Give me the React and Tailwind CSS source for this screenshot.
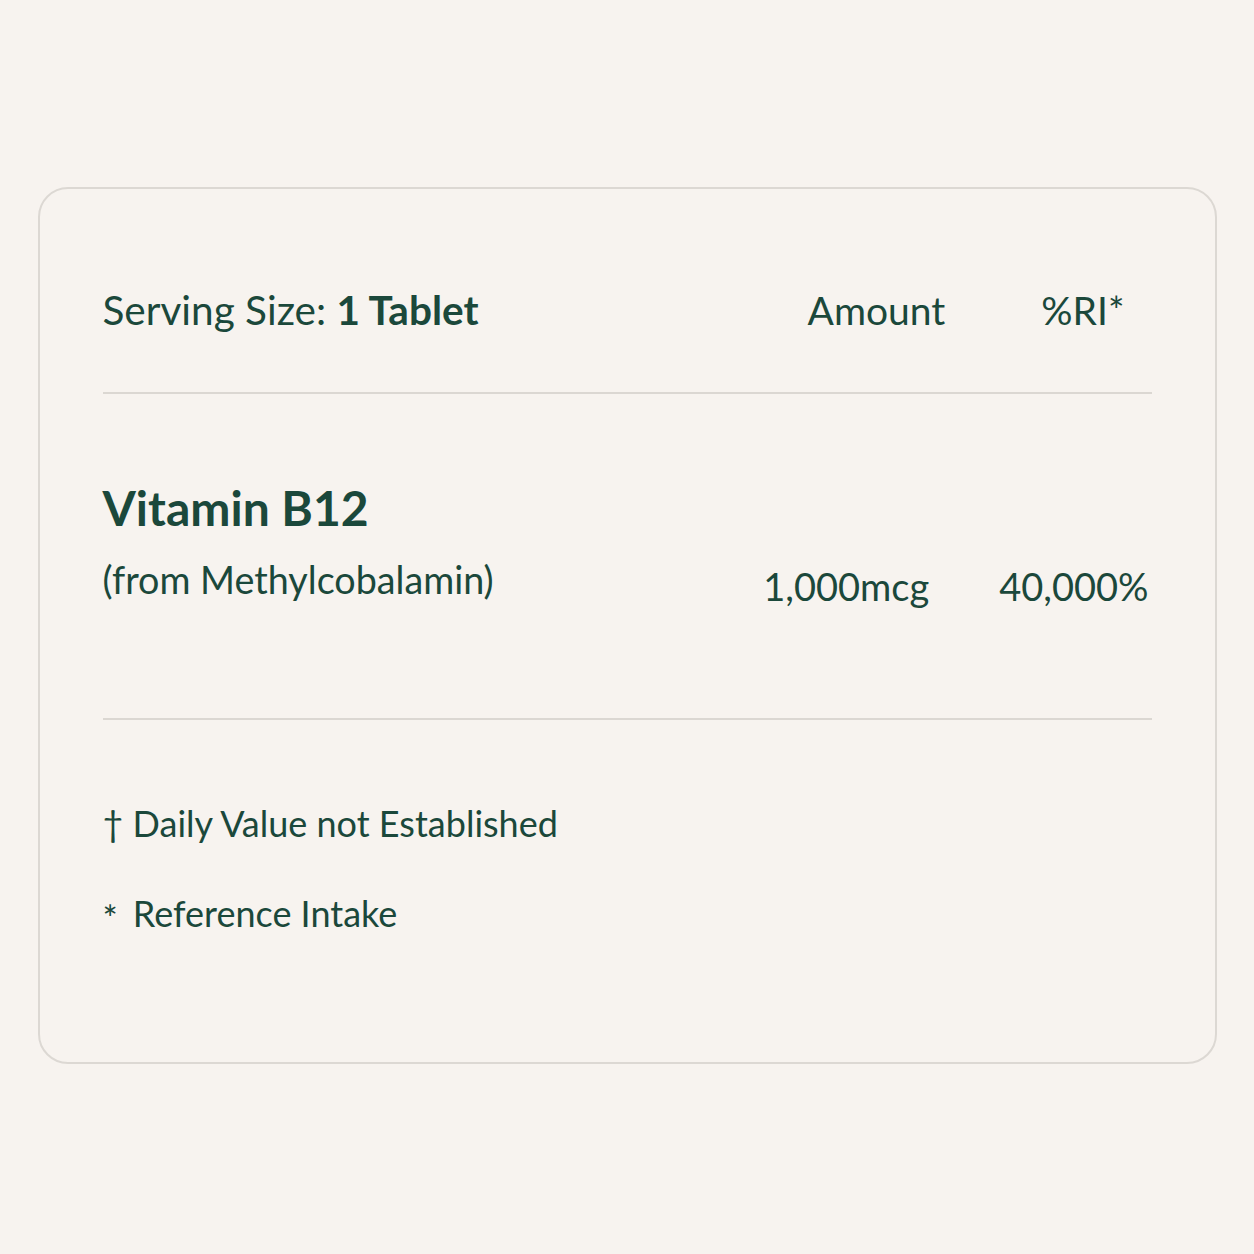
export default function App() {
  const font = { fontFamily: "Lato, 'Open Sans', sans-serif" };
  return (
    <div className="min-h-screen w-full bg-[#f7f3ef] flex justify-center pt-[187px]" style={font}>
      <div className="w-[1179px] h-[877px] rounded-[30px] border-2 border-[#dcd8d3] bg-[#f7f3ef] px-[63px] text-[#1b483b]">
        <div className="flex items-center border-b-2 border-[#dbd7d2] pt-[97px] pb-[58px]">
          <div className="text-[40.5px] leading-[48px]">
            Serving Size: <span className="font-bold">1 Tablet</span>
          </div>
          <div className="ml-auto text-[39px] leading-[48px]">Amount</div>
          <div className="ml-[96px] mr-[27px] text-[39px] leading-[48px]">%RI*</div>
        </div>
        <div className="flex items-end border-b-2 border-[#dbd7d2] pt-[86px] pb-[115px]">
          <div>
            <div className="text-[48px] leading-[56px] font-bold">Vitamin B12</div>
            <div className="mt-[21px] text-[37.7px] leading-[46px]">(from Methylcobalamin)</div>
          </div>
          <div className="ml-auto text-[38px] leading-[46px] relative top-[6px]">1,000mcg</div>
          <div className="ml-[70px] mr-[3px] text-[38px] leading-[46px] relative top-[6px]">40,000%</div>
        </div>
        <div className="pt-[81px]">
          <div className="text-[36px] leading-[44px]">† Daily Value not Established</div>
          <div className="mt-[46px] text-[36px] leading-[44px]">
            <span className="relative top-[5px]">*</span>
            <span className="ml-[15px]">Reference Intake</span>
          </div>
        </div>
      </div>
    </div>
  );
}
